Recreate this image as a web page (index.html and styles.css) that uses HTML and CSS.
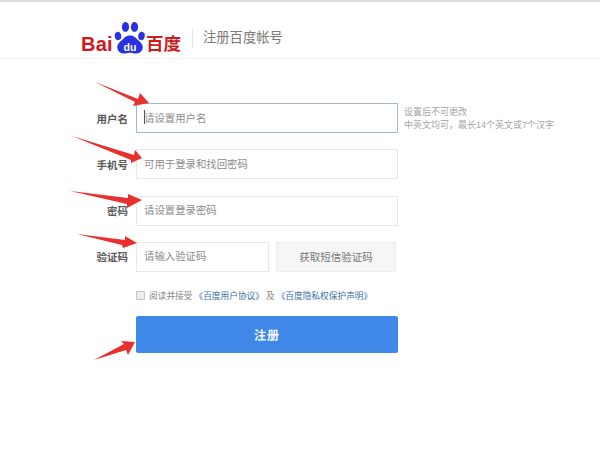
FILE: index.html
```html
<!DOCTYPE html>
<html lang="zh">
<head>
<meta charset="utf-8">
<title>注册百度帐号</title>
<link rel="stylesheet" href="styles.css">
</head>
<body>
<header class="header">
  <div class="logo">
    <span class="logo-bai">Bai</span>
    <svg class="paw" viewBox="0 0 32 34" width="32" height="34" aria-hidden="true">
      <ellipse cx="4" cy="15" rx="3.200" ry="4.200" fill="#2932e1" transform="rotate(-12 4 15)"/>
      <ellipse cx="11.500" cy="6" rx="3.600" ry="5" fill="#2932e1"/>
      <ellipse cx="20.500" cy="6" rx="3.600" ry="5" fill="#2932e1"/>
      <ellipse cx="27.500" cy="15" rx="3.200" ry="4.200" fill="#2932e1" transform="rotate(12 27.500 15)"/>
      <path d="M16 14.500c4.500 0 5.500 2.500 8.500 5 3.500 2.800 5 5.500 4 8.500-1 3.500-4.500 5-8 4.500-2-.3-3.300-.8-4.500-.8s-2.500.5-4.500.8c-3.500.5-7-1-8-4.500-1-3 .5-5.700 4-8.500 3-2.500 4-5 8.500-5z" fill="#2932e1"/>
      <text x="16" y="29.500" class="paw-text">du</text>
    </svg>
    <span class="logo-cn">百度</span>
  </div>
  <h1 class="title">注册百度帐号</h1>
</header>

<form class="form">
  <div class="row">
    <label class="label">用户名</label>
    <input class="field field-focus" placeholder="请设置用户名">
    <p class="hint">设置后不可更改<br>中英文均可，最长14个英文或7个汉字</p>
  </div>
  <div class="row">
    <label class="label">手机号</label>
    <input class="field" placeholder="可用于登录和找回密码">
  </div>
  <div class="row">
    <label class="label">密码</label>
    <input class="field" placeholder="请设置登录密码">
  </div>
  <div class="row">
    <label class="label">验证码</label>
    <input class="field field-code" placeholder="请输入验证码">
    <button type="button" class="sms">获取短信验证码</button>
  </div>
  <div class="agree">
    <span class="check"></span>
    <span>阅读并接受</span>
    <a class="link">《百度用户协议》</a>
    <span>及</span>
    <a class="link">《百度隐私权保护声明》</a>
  </div>
  <button type="button" class="submit">注册</button>
</form>

<svg class="arrows" viewBox="0 0 600 458" width="600" height="458" aria-hidden="true">
  <line x1="144.500" y1="110" x2="144.500" y2="124" stroke="#555" stroke-width="1"/>
  <g fill="#e8312f">
    <polygon points="95,82 138,99 140,93 149,103 133,106 135,102"/>
    <polygon points="72,136 134,155 135,150 142,158 131,163 131,160"/>
    <polygon points="70,191 128,198 128,194 142,200 127,208 127,204"/>
    <polygon points="77,234 125,240 125,236 137,243 123,248 122,245"/>
    <polygon points="94,360 124,344 121,341 135,342 128,355 126,350"/>
  </g>
</svg>
</body>
</html>
```

FILE: styles.css
```css
* { box-sizing: border-box; }

html, body {
  margin: 0;
  padding: 0;
  background: #fff;
}

body {
  position: relative;
  width: 600px;
  height: 458px;
  overflow: hidden;
  border-top: 2px solid #dcdcdc;
  font-family: "Liberation Sans", "Noto Sans CJK SC", sans-serif;
}

.header {
  display: flex;
  align-items: center;
  height: 57px;
  padding: 15px 0 0 81px;
  border-bottom: 1px solid #f4f4f4;
}

.logo {
  display: flex;
  align-items: flex-end;
  width: 111px;
  height: 33px;
}

.logo-bai {
  width: 33px;
  font-size: 20px;
  line-height: 19px;
  font-weight: 700;
  color: #cf1a20;
  letter-spacing: 0.2px;
}

.paw {
  display: block;
  margin-bottom: -1px;
}

.paw-text {
  font-family: "Liberation Sans", sans-serif;
  font-size: 10.500px;
  font-weight: 700;
  fill: #fff;
  text-anchor: middle;
}

.logo-cn {
  font-size: 17.500px;
  line-height: 19px;
  color: #cf1a20;
  font-weight: 700;
}

.title {
  margin: 0;
  padding-left: 10px;
  border-left: 1px solid #e6e6e6;
  font-size: 13.300px;
  line-height: 20px;
  font-weight: 400;
  color: #7a7a7a;
}

.form {
  display: flex;
  flex-direction: column;
  padding: 44px 0 0 88px;
}

.row {
  display: flex;
  align-items: center;
  height: 30px;
  margin-bottom: 16.330px;
}

.label {
  width: 40px;
  margin-right: 8px;
  font-size: 10.500px;
  font-weight: 700;
  color: #5a5a5a;
  text-align: right;
}

.field {
  width: 262px;
  height: 30px;
  padding: 0 7px;
  border: 1px solid #e8e8e8;
  border-radius: 0;
  outline: 0;
  background: #fff;
  font-family: inherit;
  font-size: 10.400px;
}

.field::placeholder {
  color: #8c8c8c;
  opacity: 1;
}

.field-focus {
  border-color: #9db9d4;
}

.field-code {
  width: 133px;
  flex: none;
}

.hint {
  margin: 2px 0 0 6px;
  width: 170px;
  font-size: 9px;
  line-height: 13px;
  color: #a5a5a5;
  white-space: nowrap;
}

.sms {
  width: 120px;
  height: 30px;
  margin-left: 7px;
  padding: 0;
  border: 1px solid #ececec;
  background: #f6f6f6;
  font-family: inherit;
  font-size: 10.500px;
  color: #777;
}

.agree {
  display: flex;
  align-items: center;
  gap: 2px;
  height: 14px;
  margin: 0 0 14px 48px;
  font-size: 8.700px;
  color: #888;
  white-space: nowrap;
}

.check {
  width: 9px;
  height: 9px;
  margin-right: 2px;
  border: 1px solid #c4c4c4;
  border-radius: 1px;
  background: #eee;
}

.link {
  color: #3d6fa8;
}

.submit {
  width: 262px;
  height: 37px;
  margin-left: 48px;
  padding: 0;
  border: 0;
  border-radius: 2px;
  background: #3f88e8;
  font-family: inherit;
  font-size: 12px;
  font-weight: 700;
  letter-spacing: 1px;
  color: #f4f8fd;
}

.arrows {
  position: absolute;
  top: -2px;
  left: 0;
  pointer-events: none;
}
```
